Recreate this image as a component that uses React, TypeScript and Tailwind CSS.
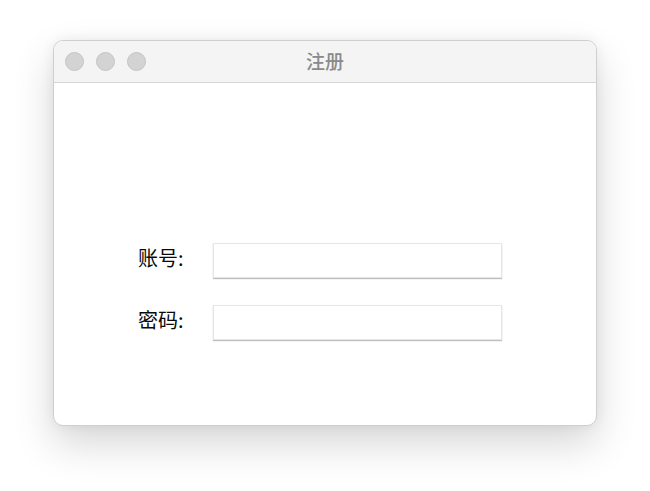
export default function App() {
  const font = "font-['Noto_Sans_CJK_SC','Noto_Sans',sans-serif]";
  return (
    <div className={`min-h-[491px] w-[650px] bg-white pl-[53px] pt-[40px] ${font}`}>
      <div className="flex h-[386px] w-[544px] flex-col overflow-hidden rounded-[10px] border border-[#cfcfcf] bg-white shadow-[0_18px_40px_rgba(0,0,0,0.16),0_0_14px_rgba(0,0,0,0.06)]">
        <div className="relative flex h-[42px] shrink-0 items-center border-b border-[#d6d6d6] bg-[#f4f4f4] pl-[11px]">
          <div className="flex gap-[12px]">
            <span className="h-[19px] w-[19px] rounded-full border border-[#c4c4c4] bg-[#d3d3d3]" />
            <span className="h-[19px] w-[19px] rounded-full border border-[#c4c4c4] bg-[#d3d3d3]" />
            <span className="h-[19px] w-[19px] rounded-full border border-[#c4c4c4] bg-[#d3d3d3]" />
          </div>
          <div className="absolute inset-0 flex items-center justify-center text-[19px] font-medium text-[#8a8a8a]">
            注册
          </div>
        </div>
        <div className="flex flex-1 flex-col gap-[27px] pl-[84px] pt-[160px]">
          {["账号:", "密码:"].map((label) => (
            <div key={label} className="flex items-center">
              <span className="mb-[6px] w-[75px] text-[20px] leading-none text-[#0a0a0a]">{label}</span>
              <div className="h-[35px] w-[289px] border border-[#e6e6e6] bg-white shadow-[0_1px_1px_rgba(0,0,0,0.25)]" />
            </div>
          ))}
        </div>
      </div>
    </div>
  );
}
